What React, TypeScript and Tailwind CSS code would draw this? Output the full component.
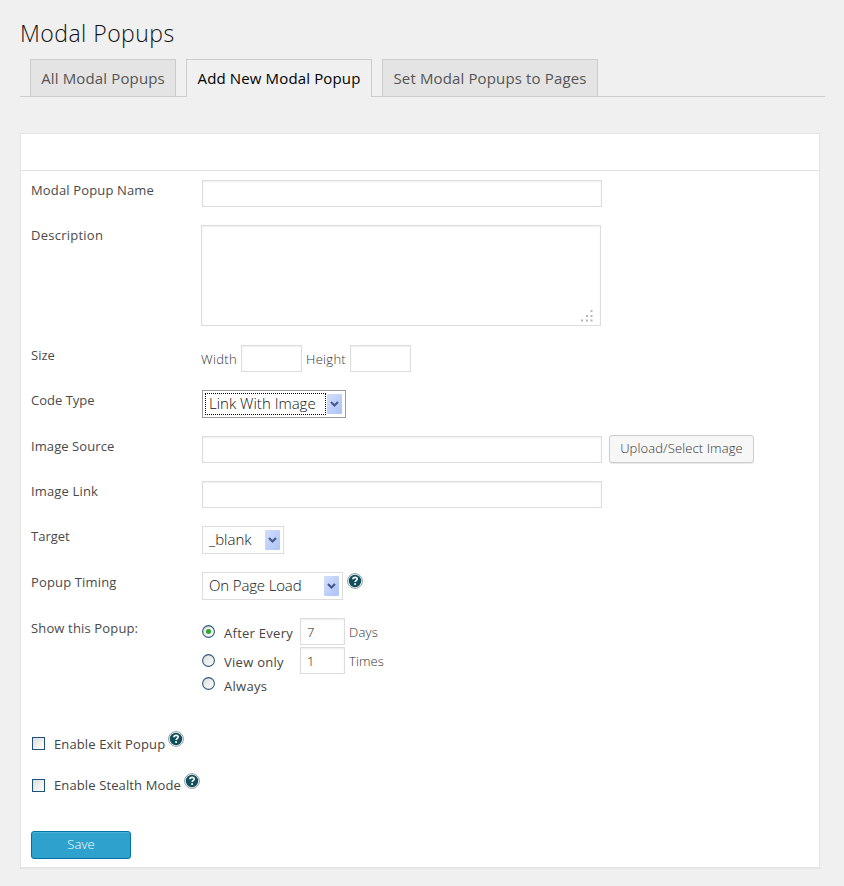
import React from "react";

function Row({ label, className, labelClass = "tracking-[0.15px]", children }: { label: string; className: string; labelClass?: string; children: React.ReactNode }) {
  return (
    <div className={"flex items-start " + className}>
      <div className={"w-[170px] shrink-0 text-[13px] leading-5 text-[#4a4a4a] " + labelClass}>{label}</div>
      {children}
    </div>
  );
}

function Field({ className, value }: { className: string; value?: string }) {
  return (
    <input
      type="text"
      defaultValue={value}
      className={"h-[27px] shrink-0 border border-[#dddddd] bg-white px-1.5 font-light text-[#222222] shadow-[inset_0_1px_2px_rgba(0,0,0,0.07)] outline-none " + className}
    />
  );
}

function DropButton() {
  return (
    <svg width="15" height="20" viewBox="0 0 15 20" className="shrink-0">
      <defs>
        <linearGradient id="drop" x1="0" y1="0" x2="1" y2="1">
          <stop offset="0" stopColor="#d3defa" />
          <stop offset="1" stopColor="#acc3f8" />
        </linearGradient>
      </defs>
      <rect width="15" height="20" rx="1" fill="url(#drop)" />
      <path d="M4 8 L7.5 11.5 L11 8" fill="none" stroke="#46598a" strokeWidth="2.2" />
    </svg>
  );
}

function Select({ text, className, focused }: { text: string; className: string; focused?: boolean }) {
  return (
    <div
      className={
        "ml-px flex h-7 shrink-0 items-center justify-between border bg-white pr-[3px] pl-0.5 " +
        (focused ? "border-[#999999] " : "border-[#dddddd] ") +
        className
      }
    >
      <div
        className={
          "flex h-[22px] flex-1 items-center border border-dotted pb-[2px] pl-[3px] text-[15px] leading-5 font-light whitespace-nowrap text-[#111111] " +
          (focused ? "mr-px border-black" : "border-transparent")
        }
      >
        {text}
      </div>
      <DropButton />
    </div>
  );
}

function Help({ className }: { className: string }) {
  return (
    <svg width="16" height="16" viewBox="0 0 16 16" className={"shrink-0 " + className}>
      <circle cx="8" cy="8" r="7.4" fill="#ffffff" stroke="#8d9a9f" strokeWidth="1" />
      <circle cx="8" cy="8" r="6.2" fill="#124f5c" />
      <path d="M5.9 6.3 Q6 4.4 8.1 4.4 Q10.2 4.4 10.2 6.1 Q10.2 7.1 9 7.7 Q8.1 8.2 8.1 9.1" fill="none" stroke="#ffffff" strokeWidth="1.6" />
      <rect x="7.2" y="10.2" width="1.8" height="1.7" fill="#ffffff" />
    </svg>
  );
}

function Radio({ checked }: { checked?: boolean }) {
  return (
    <svg width="13" height="13" viewBox="0 0 13 13" className="shrink-0">
      <defs>
        <linearGradient id="well" x1="0" y1="0" x2="1" y2="1">
          <stop offset="0" stopColor="#dcdcd7" />
          <stop offset="1" stopColor="#ffffff" />
        </linearGradient>
      </defs>
      <circle cx="6.5" cy="6.5" r="5.9" fill="url(#well)" stroke="#2f5884" strokeWidth="1.1" />
      {checked && <circle cx="6.5" cy="6.5" r="2.5" fill="#2fa82e" />}
    </svg>
  );
}

function Checkbox() {
  return <span className="size-[13px] shrink-0 border border-[#1c5180] bg-linear-to-br from-[#dcdcd7] to-white" />;
}

const tab = "border border-b-0 border-[#cccccc] pt-[6px] text-[15px] leading-6 whitespace-nowrap text-center tracking-[0.14px] ";
const hint = "text-[13px] leading-5 font-light text-[#333333] ";
const option = "w-[76px] shrink-0 text-[13px] leading-5 tracking-[0.27px] text-[#444444] ";

export default function App() {
  return (
    <div className="h-[886px] w-[844px] overflow-hidden bg-[#f0f0f0] pt-[17px] pl-5 font-['Open_Sans',sans-serif]">
      <h1 className="h-[42px] text-[23px] leading-8 font-light tracking-[0.47px] text-[#111111]">Modal Popups</h1>
      <div className="flex h-[38px] w-[805px] items-start gap-[10px] border-b border-[#cccccc] pl-[10px]">
        <div className={tab + "h-[37px] w-[146px] bg-[#e4e4e4] text-[#555555]"}>All Modal Popups</div>
        <div className={tab + "h-[38px] w-[186px] bg-[#f0f0f0] text-black"}>Add New Modal Popup</div>
        <div className={tab + "h-[37px] w-[216px] bg-[#e4e4e4] text-[#555555]"}>Set Modal Popups to Pages</div>
      </div>

      <div className="mt-9 h-[735px] w-[800px] border border-[#e5e5e5] bg-white shadow-[0_1px_1px_rgba(0,0,0,0.04)]">
        <div className="h-[37px] border-b border-[#e2e2e2]" />
        <div className="flex flex-col pt-[9px] pl-[10px]">
          <Row label="Modal Popup Name" className="h-[45px]">
            <Field className="ml-px w-[400px]" />
          </Row>
          <Row label="Description" labelClass="tracking-[0.25px]" className="h-[120px]">
            <div className="flex h-[101px] w-[400px] items-end justify-end border border-[#dddddd] pr-[7px] pb-[3px] shadow-[inset_0_1px_2px_rgba(0,0,0,0.07)]">
              <svg width="12" height="12" viewBox="0 0 12 12" fill="#b5b5b5">
                <path d="M9.5 0h2v2h-2zM5 5h2v2h-2zM9.5 5h2v2h-2zM0 9.5h2v2h-2zM5 9.5h2v2h-2zM9.5 9.5h2v2h-2z" />
              </svg>
            </div>
          </Row>
          <Row label="Size" className="h-[45px]" labelClass="tracking-normal">
            <span className={hint + "w-10 pt-1 tracking-[0.35px]"}>Width</span>
            <Field className="w-[61px]" />
            <span className={hint + "w-12 pt-1 pl-1 tracking-[0.3px]"}>Height</span>
            <Field className="w-[61px]" />
          </Row>
          <Row label="Code Type" labelClass="tracking-normal" className="h-[45px]">
            <Select text="Link With Image" className="w-[144px]" focused />
          </Row>
          <Row label="Image Source" labelClass="pt-px tracking-[0.08px]" className="h-[46px]">
            <Field className="mt-px mr-[7px] ml-px w-[400px]" />
            <button className="h-7 w-[145px] rounded-[3px] border border-[#cccccc] bg-[#f7f7f7] text-[13px] font-light tracking-[0.12px] whitespace-nowrap text-[#333333] shadow-[0_1px_0_rgba(0,0,0,0.08)]">
              Upload/Select Image
            </button>
          </Row>
          <Row label="Image Link" className="h-[45px]">
            <Field className="ml-px w-[400px]" />
          </Row>
          <Row label="Target" labelClass="tracking-normal" className="h-[46px]">
            <Select text="_blank" className="w-[82px]" />
          </Row>
          <Row label="Popup Timing" className="h-[46px]">
            <Select text="On Page Load" className="w-[141px] tracking-[-0.15px]" />
            <Help className="mt-px ml-1" />
          </Row>
          <Row label="Show this Popup:" className="h-[113px]">
            <div className="flex flex-col pl-px">
              <div className="flex h-[29px] items-start">
                <span className="w-[22px] pt-[7px]"><Radio checked /></span>
                <span className={option + "pt-[5px]"}>After Every</span>
                <Field className="w-[45px] text-[13px]" value="7" />
                <span className={hint + "pt-1 pl-1 tracking-[0.2px]"}>Days</span>
              </div>
              <div className="flex h-[29px] items-start">
                <span className="w-[22px] pt-[7px]"><Radio /></span>
                <span className={option + "pt-[5px]"}>View only</span>
                <Field className="w-[45px] text-[13px]" value="1" />
                <span className={hint + "pt-1 pl-1 tracking-[0.1px]"}>Times</span>
              </div>
              <div className="flex items-start">
                <span className="w-[22px] pt-px"><Radio /></span>
                <span className={option + "tracking-[0.5px]"}>Always</span>
              </div>
            </div>
          </Row>
          <div className="flex h-[42px] items-start pl-px">
            <span className="flex w-[22px] pt-[6px]"><Checkbox /></span>
            <span className="w-[114px] pt-[3px] text-[13px] leading-5 tracking-[0.12px] whitespace-nowrap text-[#444444]">Enable Exit Popup</span>
            <Help className="" />
          </div>
          <div className="flex h-[58px] items-start pl-px">
            <span className="flex w-[22px] pt-[6px]"><Checkbox /></span>
            <span className="w-[130px] pt-[2px] text-[13px] leading-5 tracking-[0.12px] whitespace-nowrap text-[#444444]">Enable Stealth Mode</span>
            <Help className="" />
          </div>
          <button className="h-7 w-[100px] rounded-[3px] border border-[#0074a2] bg-[#2ea2cc] text-[13px] font-light tracking-[0.15px] text-white shadow-[inset_0_1px_0_rgba(120,200,230,0.4)]">
            Save
          </button>
        </div>
      </div>
    </div>
  );
}
